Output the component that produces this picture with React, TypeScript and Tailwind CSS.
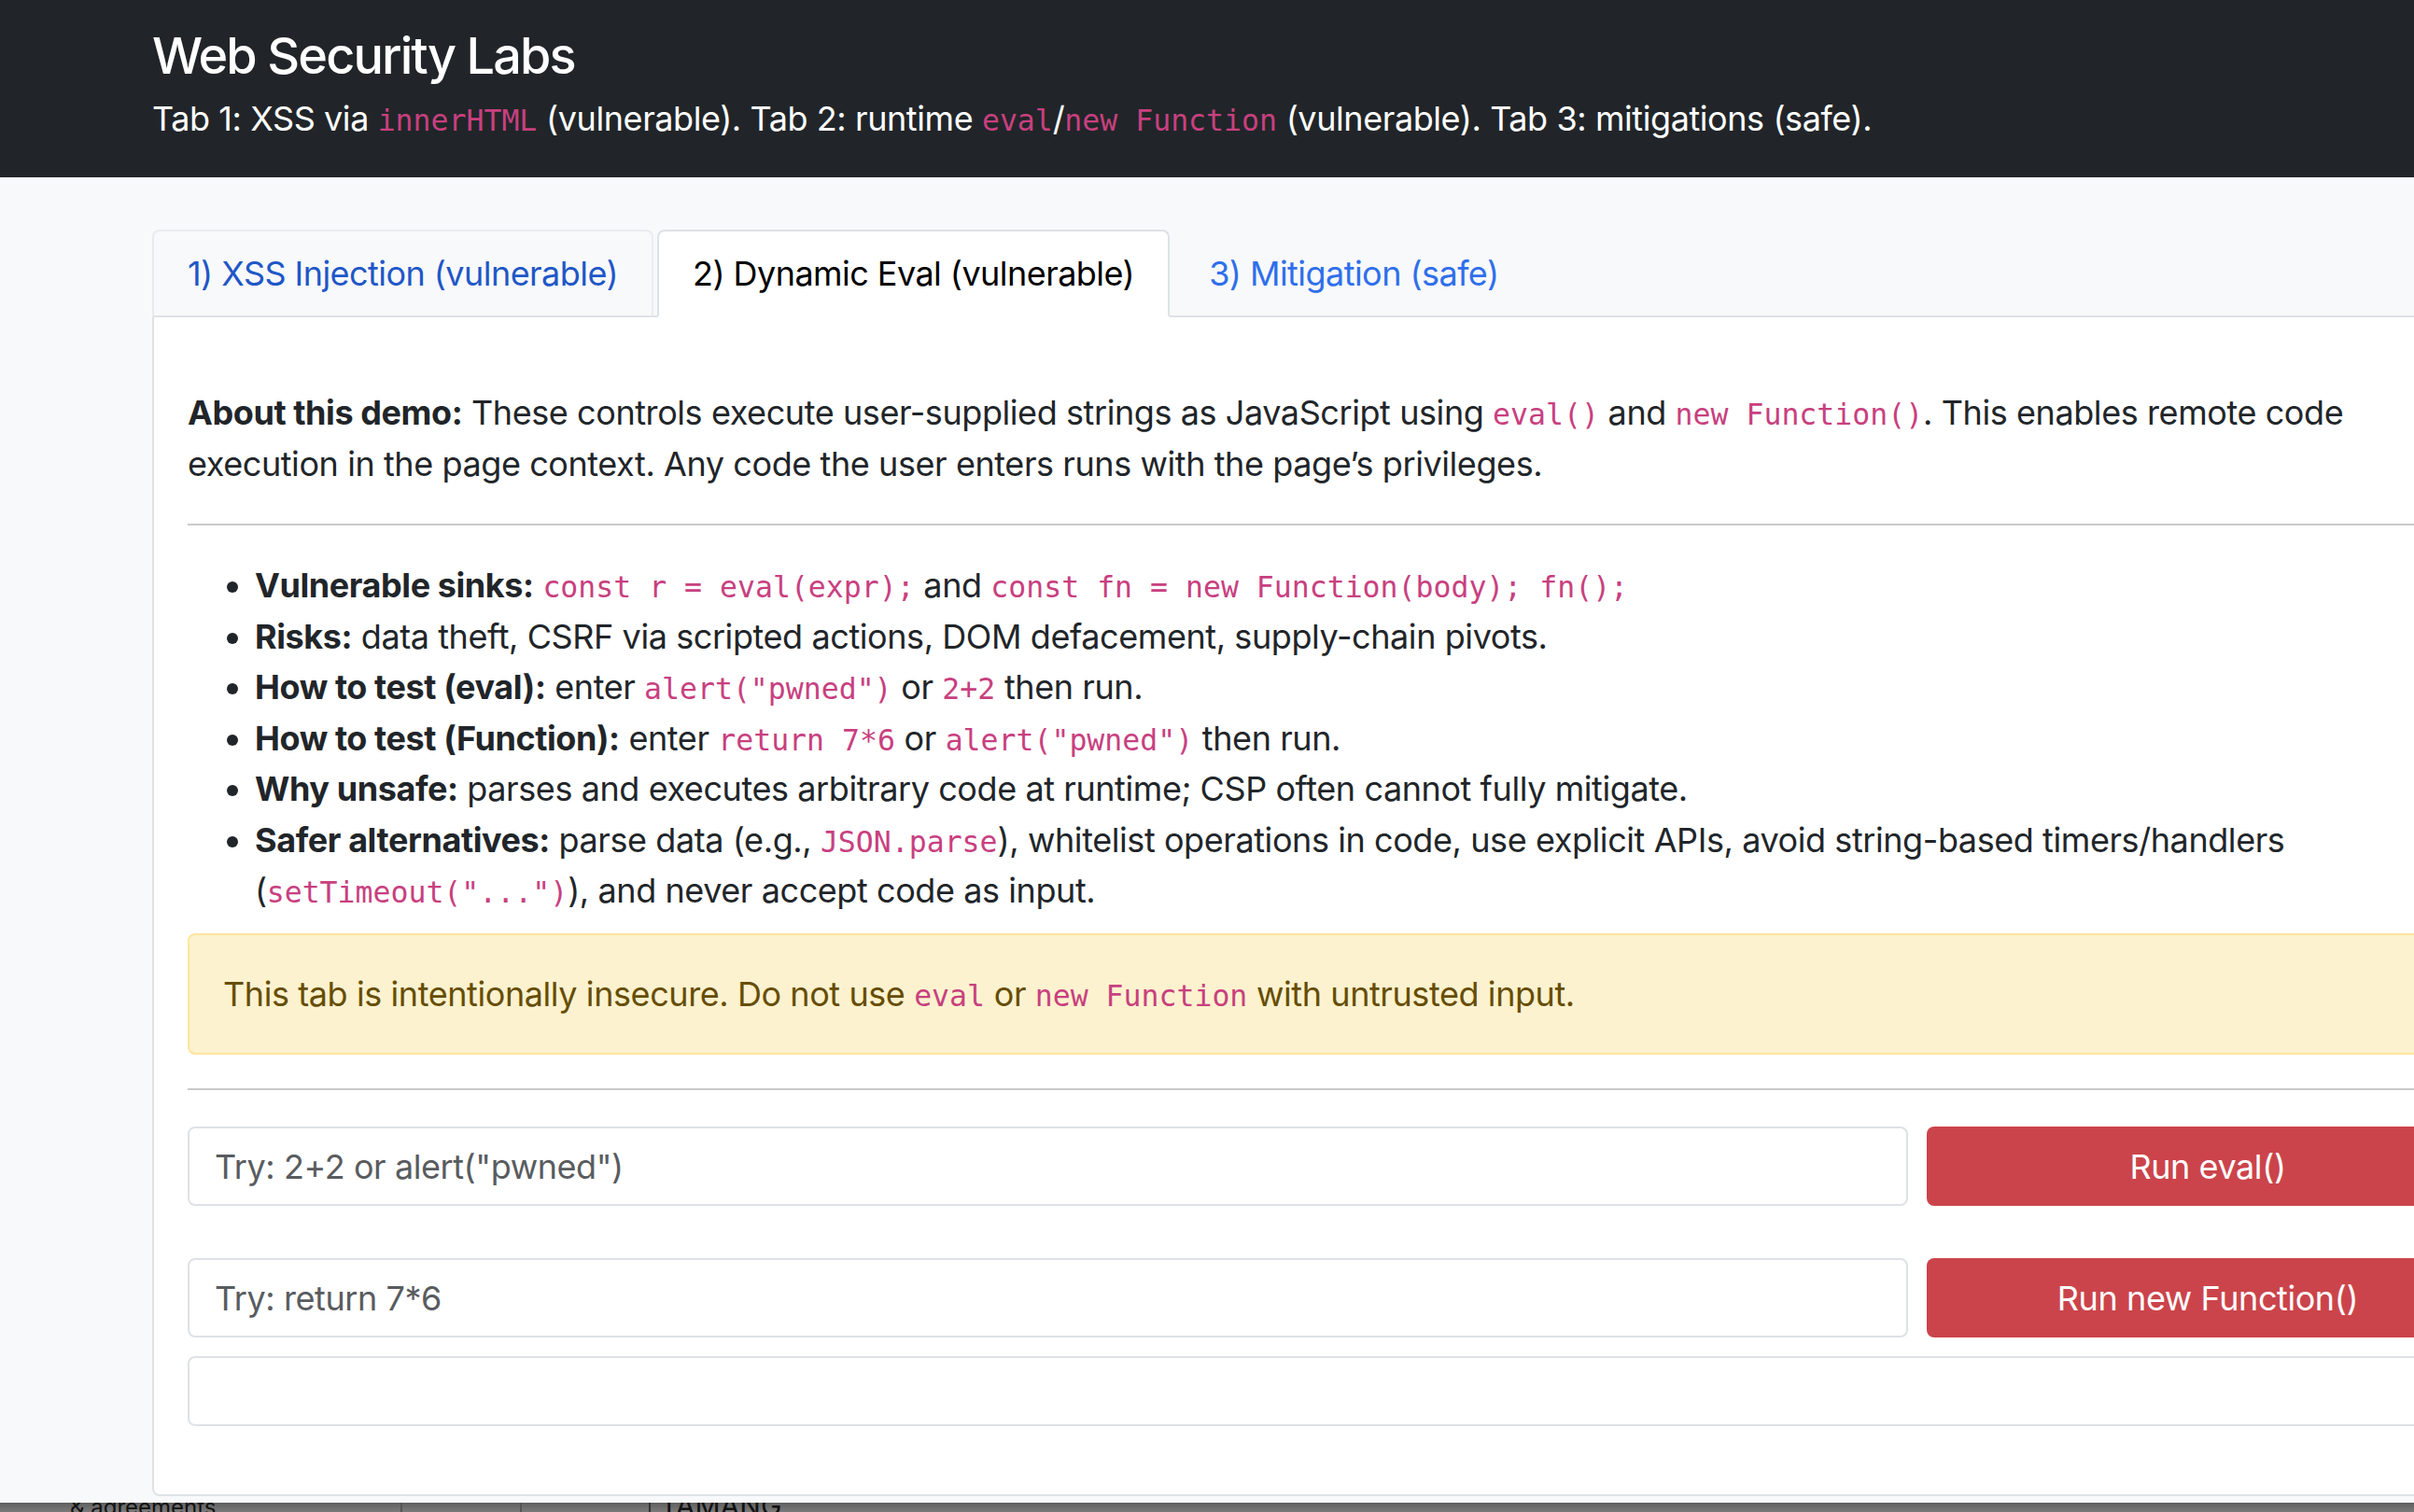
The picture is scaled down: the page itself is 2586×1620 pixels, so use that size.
import React from "react";

function Code({ children }: { children: React.ReactNode }) {
  return (
    <code className="font-['DejaVu_Sans_Mono',monospace] text-[31.5px] leading-none tracking-normal text-[#c8407f]">
      {children}
    </code>
  );
}

const tabBase = "-mb-[2px] border-2 rounded-t-[8px] px-[36px] py-[18px] leading-[54px] tracking-[-0.55px] whitespace-nowrap";

function Tabs() {
  return (
    <ul className="flex gap-[4px] border-b-2 border-[#dee2e6] w-[2541px]">
      <li className={tabBase + " border-[#e9ecef] border-b-[#dee2e6] text-[#1f57c7]"}>1) XSS Injection (vulnerable)</li>
      <li className={tabBase + " bg-white border-[#dee2e6] border-b-white text-black"}>2) Dynamic Eval (vulnerable)</li>
      <li className={tabBase + " border-transparent text-[#2f6feb]"}>3) Mitigation (safe)</li>
    </ul>
  );
}

function RunRow({ placeholder, label, last }: { placeholder: string; label: string; last?: boolean }) {
  return (
    <div className={"flex gap-[20px] " + (last ? "" : "mb-[56px]")}>
      <input
        placeholder={placeholder}
        className="flex-1 h-[85px] border-2 border-[#dee2e6] rounded-[8px] px-[27px] text-[36px] tracking-[-0.42px] outline-none placeholder:text-[#595c5f] bg-white"
      />
      <button className="w-[602px] h-[85px] rounded-[8px] bg-[#cb444b] text-white text-[36px] leading-[54px] tracking-[-0.42px]">
        {label}
      </button>
    </div>
  );
}

export default function App() {
  return (
    <div className="w-[2586px] h-[1620px] overflow-hidden flex flex-col bg-[#f8f9fa] text-[#212529] font-['Inter','Noto_Sans',sans-serif] text-[36px] leading-[54.5px] tracking-[-0.42px]">
      <header className="bg-[#212529] text-white pl-[163px] pt-[27px] h-[190px] shrink-0">
        <h1 className="text-[54px] leading-[65px] font-medium tracking-[-1.9px] mb-[8px]">Web Security Labs</h1>
        <p className="leading-[54px]">
          Tab 1: XSS via <Code>innerHTML</Code> (vulnerable). Tab 2: runtime <Code>eval</Code>/<Code>new Function</Code>{" "}
          (vulnerable). Tab 3: mitigations (safe).
        </p>
      </header>

      <main className="flex-1 pl-[163px] pt-[56px] overflow-hidden">
        <Tabs />
        <section className="w-[2541px] bg-white border-2 border-t-0 border-[#dee2e6] rounded-b-[8px] pt-[75px] px-[36px] pb-[73px]">
          <p className="mb-[37px]">
            <strong className="font-bold">About this demo:</strong> These controls execute user-supplied strings as
            JavaScript using <Code>eval()</Code> and <Code>new Function()</Code>. This enables remote code
            <br />
            execution in the page context. Any code the user enters runs with the page’s privileges.
          </p>
          <hr className="border-0 h-[2px] bg-[#c9cacb] mb-[37px]" />
          <ul className="list-disc pl-[72px] mb-[18px]">
            <li>
              <strong className="font-bold">Vulnerable sinks:</strong> <Code>const r = eval(expr);</Code> and{" "}
              <Code>const fn = new Function(body); fn();</Code>
            </li>
            <li>
              <strong className="font-bold">Risks:</strong> data theft, CSRF via scripted actions, DOM defacement,
              supply-chain pivots.
            </li>
            <li>
              <strong className="font-bold">How to test (eval):</strong> enter <Code>alert("pwned")</Code> or{" "}
              <Code>2+2</Code> then run.
            </li>
            <li>
              <strong className="font-bold">How to test (Function):</strong> enter <Code>return 7*6</Code> or{" "}
              <Code>alert("pwned")</Code> then run.
            </li>
            <li>
              <strong className="font-bold">Why unsafe:</strong> parses and executes arbitrary code at runtime; CSP
              often cannot fully mitigate.
            </li>
            <li>
              <strong className="font-bold">Safer alternatives:</strong> parse data (e.g., <Code>JSON.parse</Code>),
              whitelist operations in code, use explicit APIs, avoid string-based timers/handlers
              <br />(<Code>setTimeout("...")</Code>), and never accept code as input.
            </li>
          </ul>
          <div className="border-2 border-[#ffe69c] bg-[#fdf2cf] text-[#664d03] rounded-[8px] px-[36px] py-[36px] mb-[36px]">
            This tab is intentionally insecure. Do not use <Code>eval</Code> or <Code>new Function</Code> with
            untrusted input.
          </div>
          <hr className="border-0 h-[2px] bg-[#c9cacb] mb-[39px]" />
          <RunRow placeholder={'Try: 2+2 or alert("pwned")'} label="Run eval()" />
          <RunRow placeholder="Try: return 7*6" label="Run new Function()" last />
          <div className="mt-[20px] h-[75px] border-2 border-[#dee2e6] rounded-[8px]" />
        </section>
      </main>

      <footer className="h-[10px] shrink-0 bg-gradient-to-b from-[#5f5f5f] to-[#7a7a7a] flex items-start text-[#111] text-[24px] leading-[22px] tracking-normal overflow-hidden">
        <span className="pl-[75px] w-[429px] -mt-[6px]">&amp; agreements</span>
        <span className="w-[128px] h-full border-l-2 border-[#555]" />
        <span className="w-[138px] h-full border-l-2 border-[#555]" />
        <span className="border-l-2 border-[#333] pl-[10px] -mt-[8px] text-[30px]">TAMANG</span>
      </footer>
    </div>
  );
}
